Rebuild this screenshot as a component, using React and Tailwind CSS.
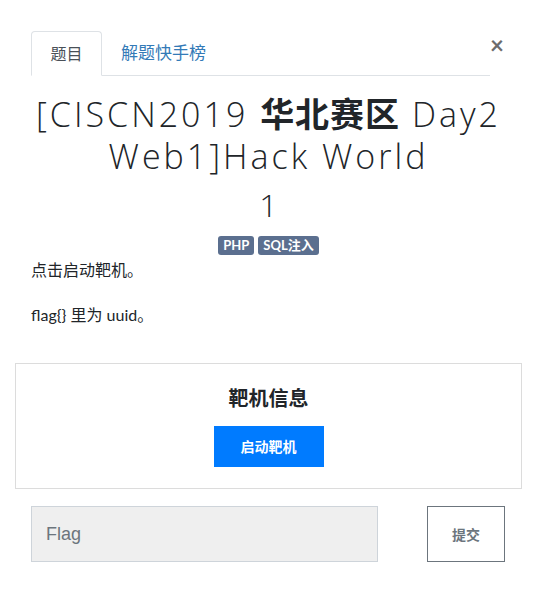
export default function App() {
  return (
    <div className="min-h-screen bg-white text-[#212529]" style={{ fontFamily: 'Lato, "Noto Sans CJK SC", sans-serif' }}>
      <div className="relative pt-[31px] px-[15px]">
        <button className="absolute right-[33px] top-[33px] text-[24px] leading-none font-bold text-[#6c6c6c]">×</button>
        <div className="ml-[16px] mr-[32px] flex border-b border-[#dee2e6]">
          <div className="w-[71px] h-[45px] -mb-px flex items-center justify-center border border-[#dee2e6] border-b-white rounded-t-[4px] bg-white text-[16px] text-[#495057]">
            题目
          </div>
          <div className="px-[19px] h-[44px] flex items-center text-[17px] text-[#337ab7]">解题快手榜</div>
        </div>
        <h1
          className="mt-[17px] text-center text-[34px] leading-[42px] font-light tracking-[3px] text-[#212529]"
          style={{ fontFamily: '"Open Sans", "Noto Sans CJK SC", sans-serif' }}
        >
          [CISCN2019 <span className="font-bold tracking-[1px]">华北赛区</span> Day2 Web1]Hack World
        </h1>
        <h3
          className="mt-[9px] text-center text-[32px] leading-[38px] font-light"
          style={{ fontFamily: '"Open Sans", sans-serif' }}
        >
          1
        </h3>
        <div className="mt-[12px] flex justify-center gap-[4px]">
          <span className="h-[19px] px-[5px] flex items-center rounded-[3px] bg-[#5b6f8f] text-white text-[13px] font-bold">PHP</span>
          <span className="h-[19px] px-[5px] flex items-center rounded-[3px] bg-[#5b6f8f] text-white text-[13px] font-bold">SQL注入</span>
        </div>
        <div className="px-[16px] text-[16px] leading-[24px]">
          <p className="mt-[3px]">点击启动靶机。</p>
          <p className="mt-[21px]">flag{"{}"} 里为 uuid。</p>
        </div>
        <div className="mt-[36px] h-[126px] border border-[#dcdcdc] flex flex-col items-center">
          <div className="mt-[22px] text-[20px] leading-[24px] font-bold">靶机信息</div>
          <button className="mt-[16px] w-[110px] h-[41px] bg-[#007bff] text-white text-[14px] font-bold">启动靶机</button>
        </div>
        <div className="mt-[17px] px-[16px] flex items-center">
          <div className="w-[347px] h-[56px] bg-[#efefef] border border-[#ced4da] flex items-center px-[14px] text-[18px] text-[#6c757d]" style={{ fontFamily: '"Liberation Sans", sans-serif' }}>
            Flag
          </div>
          <button className="ml-[49px] w-[78px] h-[56px] border border-[#6c757d] text-[#6c757d] text-[14px] font-bold">提交</button>
        </div>
      </div>
    </div>
  )
}
